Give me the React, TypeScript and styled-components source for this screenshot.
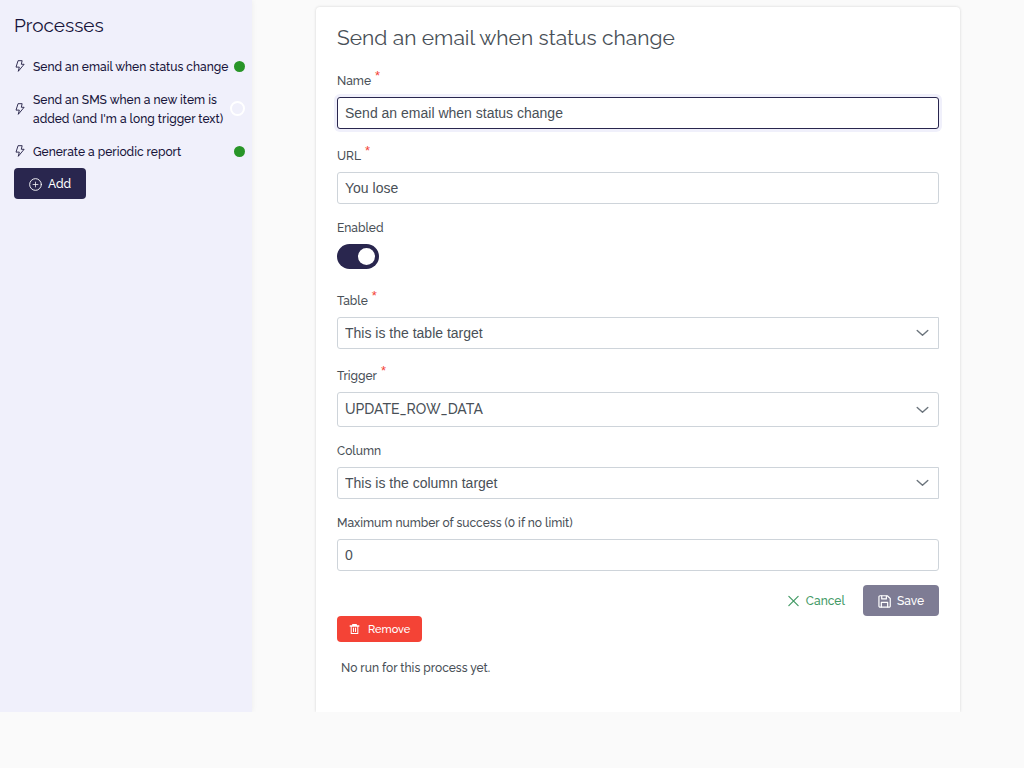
import React, { useState } from 'react';
import styled, { createGlobalStyle, css } from 'styled-components';

const GlobalStyle = createGlobalStyle`
  *, *::before, *::after { box-sizing: border-box; }
  body {
    margin: 0;
    background: #fafafa;
    color: #495057;
    font-family: Raleway, Lato, 'Open Sans', sans-serif;
    font-size: 12px;
    font-weight: 500;
    line-height: 19px;
  }
  button, input, select { font: inherit; }
`;

const Page = styled.div`
  display: flex;
  align-items: stretch;
`;

const Sidebar = styled.aside`
  flex: 0 0 252px;
  padding: 14px 7px 14px 14px;
  background: #f0f0fb;
  color: #17143a;
  box-shadow: 0 0 6px rgba(0, 0, 0, 0.06);
`;

const SidebarTitle = styled.h1`
  margin: 0 0 20px;
  font-size: 19px;
  font-weight: 400;
  line-height: 22px;
`;

const ProcessList = styled.ul`
  display: flex;
  flex-direction: column;
  gap: 13px;
  margin: 0 0 7px;
  padding: 0;
  list-style: none;
`;

const ProcessItem = styled.li`
  display: flex;
  align-items: center;
`;

const ProcessLink = styled.a`
  display: flex;
  flex: 1 0 0;
  align-items: center;
  gap: 7px;
  color: inherit;
  text-decoration: none;
`;

const ProcessName = styled.span`
  flex: 1;
  padding-top: 1px;
  margin-top: 1px;
  margin-bottom: -1px;
`;

const Status = styled.span<{ $on: boolean }>`
  flex: none;
  border-radius: 50%;
  ${({ $on }) =>
    $on
      ? css`
          width: 11px;
          height: 11px;
          background: #289528;
        `
      : css`
          width: 15px;
          height: 15px;
          border: 2px solid #ffffff;
        `}
`;

const Button = styled.button<{ $kind: 'primary' | 'text' | 'danger' }>`
  display: inline-flex;
  align-items: center;
  gap: 6px;
  height: 31px;
  padding: 1px 15px 0;
  border: 0;
  border-radius: 4px;
  background: #29264e;
  color: #ffffff;
  cursor: pointer;
  &:disabled {
    opacity: 0.6;
    cursor: default;
  }
  ${({ $kind }) =>
    $kind === 'text' &&
    css`
      background: transparent;
      color: #439a66;
    `}
  ${({ $kind }) =>
    $kind === 'danger' &&
    css`
      gap: 8px;
      height: 26px;
      padding: 0 12px;
      background: #f44336;
      font-size: 11px;
    `}
`;

const Main = styled.main`
  flex: 1;
  min-width: 0;
  padding: 7px 64px 0;
`;

const Card = styled.section`
  padding: 20px 21px 34px;
  border-radius: 4px 4px 0 0;
  background: #ffffff;
  box-shadow: 0 0 3px rgba(0, 0, 0, 0.16);
  clip-path: inset(-4px -4px 0);
`;

const CardTitle = styled.h2`
  margin: 0 0 19px;
  font-size: 21px;
  font-weight: 400;
  line-height: 22px;
`;

const Form = styled.form`
  display: flex;
  flex-direction: column;
  gap: 14px;
`;

const FieldBox = styled.div`
  display: flex;
  flex-direction: column;
`;

const Label = styled.label<{ $required?: boolean }>`
  display: flex;
  gap: 4px;
  align-items: flex-start;
  padding-bottom: 6px;
  padding-top: ${({ $required }) => ($required ? 4 : 1)}px;
`;

const Star = styled.span`
  color: #f44336;
  font-family: 'Liberation Sans', Arial, sans-serif;
  font-size: 13px;
  line-height: 7px;
`;

const control = css`
  width: 100%;
  height: 32px;
  margin: 0;
  padding: 0 7px;
  border: 1px solid #ced4da;
  border-radius: 3px;
  outline: 0;
  background: #ffffff;
  color: #495057;
  font-family: 'Liberation Sans', Arial, sans-serif;
  font-size: 14px;
  &:focus {
    border-color: #29264e;
    box-shadow: 0 0 0 3px #f0f0fb;
  }
`;

const TextInput = styled.input`
  ${control}
`;

const SelectBox = styled.div`
  display: grid;
  align-items: center;
  & > * { grid-area: 1 / 1; }
  & > svg {
    justify-self: end;
    margin-right: 10px;
    pointer-events: none;
  }
`;

const Select = styled.select<{ $plain?: boolean }>`
  ${control}
  appearance: none;
  border-radius: 3px 0 0 3px;
  ${({ $plain }) =>
    $plain &&
    css`
      height: 35px;
      border-radius: 3px;
      font-family: Raleway, Lato, sans-serif;
    `}
`;

const Switch = styled.input`
  appearance: none;
  width: 42px;
  height: 25px;
  margin: 0 0 5px;
  padding: 4px;
  border-radius: 13px;
  background: #ced4da;
  cursor: pointer;
  &::before {
    content: '';
    display: block;
    width: 17px;
    height: 17px;
    border-radius: 50%;
    background: #ffffff;
  }
  &:checked { background: #29264e; }
  &:checked::before { margin-left: 17px; }
`;

const Actions = styled.div`
  display: flex;
  justify-content: flex-end;
  gap: 3px;
`;

const EmptyRuns = styled.p`
  margin: 17px 4px 0;
`;

const Icon = ({ size = 13, children }: { size?: number; children: React.ReactNode }) => (
  <svg width={size} height={size} viewBox="0 0 14 14" fill="none" stroke="currentColor"
    strokeLinecap="round" strokeLinejoin="round" aria-hidden="true">
    {children}
  </svg>
);

const BoltIcon = () => (
  <Icon size={12}>
    <path d="M5.200 .8h4.300L8.500 5h3.300L5 13.200 6.200 8.300H2.800z" />
  </Icon>
);
const PlusCircleIcon = () => (
  <Icon>
    <circle cx="7" cy="7" r="6.300" />
    <path d="M7 4.400v5.200M4.400 7h5.200" strokeWidth=".8" />
  </Icon>
);
const CrossIcon = () => (
  <Icon><path d="M2 1.500l10 10M12 1.500l-10 10" strokeWidth="1.300" /></Icon>
);
const SaveIcon = () => (
  <Icon>
    <path d="M2.200 .8h7.800l3.200 3v8a1.200 1.200 0 0 1-1.200 1.200h-9.800a1.200 1.200 0 0 1-1.200-1.200v-9.800a1.200 1.200 0 0 1 1.200-1.200z" strokeWidth="1.300" />
    <path d="M4 1v3.200h5v-3M3.600 12.800V8h6.800v4.800" strokeWidth="1.300" />
  </Icon>
);
const TrashIcon = () => (
  <Icon size={11}>
    <path d="M1.500 2.500h11M4.800 2.300V.8h4.400v1.500" strokeWidth="1.700" />
    <path d="M2.800 2.800V12h8.400V2.800M5.700 5v4.500M8.300 5v4.500" strokeWidth="1.300" />
  </Icon>
);
const ChevronIcon = () => (
  <Icon size={14}><path d="M2.200 4.500L7.500 9.300l5.300-4.800" strokeWidth="1.400" stroke="#6c757d" /></Icon>
);

const Field = ({ id, label, required, children }: {
  id: string; label: string; required?: boolean; children: React.ReactNode;
}) => (
  <FieldBox>
    <Label htmlFor={id} $required={required}>
      {label}
      {required && <Star aria-hidden="true">*</Star>}
    </Label>
    {children}
  </FieldBox>
);

const Dropdown = ({ id, value, plain }: { id: string; value: string; plain?: boolean }) => (
  <SelectBox>
    <Select id={id} $plain={plain} defaultValue={value}>
      <option>{value}</option>
    </Select>
    <ChevronIcon />
  </SelectBox>
);

const processes = [
  { name: 'Send an email when status change', on: true },
  { name: "Send an SMS when a new item is added (and I'm a long trigger text)", on: false },
  { name: 'Generate a periodic report', on: true },
];

export default function App() {
  const [name, setName] = useState(processes[0].name);
  return (
    <>
      <GlobalStyle />
      <Page>
        <Sidebar>
          <SidebarTitle>Processes</SidebarTitle>
          <ProcessList>
            {processes.map((p) => (
              <ProcessItem key={p.name}>
                <ProcessLink href="#">
                  <BoltIcon />
                  <ProcessName>{p.name}</ProcessName>
                </ProcessLink>
                <Status $on={p.on} />
              </ProcessItem>
            ))}
          </ProcessList>
          <Button $kind="primary" type="button"><PlusCircleIcon />Add</Button>
        </Sidebar>
        <Main>
          <Card>
            <CardTitle>{processes[0].name}</CardTitle>
            <Form onSubmit={(e) => e.preventDefault()}>
              <Field id="name" label="Name" required>
                <TextInput
                  id="name"
                  autoFocus
                  value={name}
                  onChange={(e) => setName(e.target.value)}
                  onFocus={(e) => e.target.setSelectionRange(name.length, name.length)}
                />
              </Field>
              <Field id="url" label="URL" required>
                <TextInput id="url" defaultValue="You lose" />
              </Field>
              <Field id="enabled" label="Enabled">
                <Switch id="enabled" type="checkbox" role="switch" defaultChecked />
              </Field>
              <Field id="table" label="Table" required>
                <Dropdown id="table" value="This is the table target" />
              </Field>
              <Field id="trigger" label="Trigger" required>
                <Dropdown id="trigger" value="UPDATE_ROW_DATA" plain />
              </Field>
              <Field id="column" label="Column">
                <Dropdown id="column" value="This is the column target" />
              </Field>
              <Field id="max" label="Maximum number of success (0 if no limit)">
                <TextInput id="max" defaultValue="0" inputMode="numeric" />
              </Field>
              <Actions>
                <Button $kind="text" type="button"><CrossIcon />Cancel</Button>
                <Button $kind="primary" type="submit" disabled><SaveIcon />Save</Button>
              </Actions>
            </Form>
            <Button $kind="danger" type="button"><TrashIcon />Remove</Button>
            <EmptyRuns>No run for this process yet.</EmptyRuns>
          </Card>
        </Main>
      </Page>
    </>
  );
}
